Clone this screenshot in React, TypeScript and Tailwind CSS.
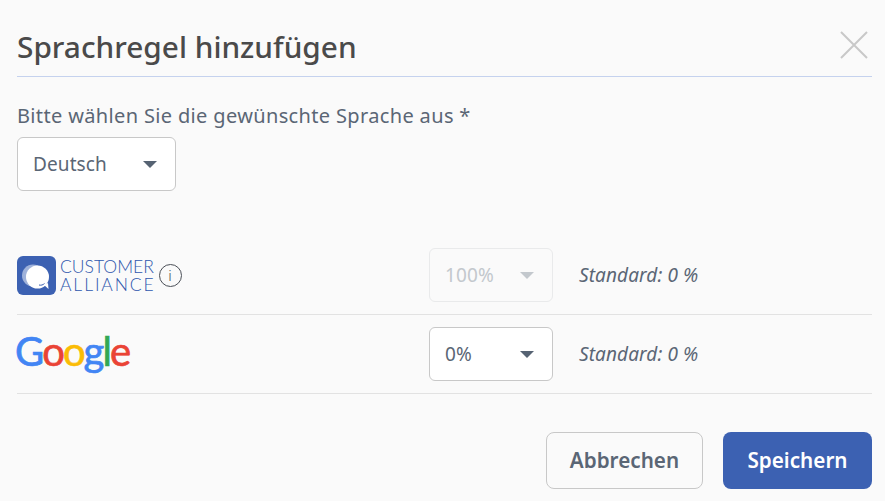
const font = "font-['Noto_Sans',sans-serif]"

function Select({ value, disabled, className }: { value: string; disabled?: boolean; className: string }) {
  return (
    <div
      className={`flex h-[54px] items-center justify-between rounded-md border pl-[15px] ${className} ${
        disabled ? "border-[#e9eaeb] text-[#c3c8cd]" : "border-[#c8c8c8] bg-white text-[#5a6675]"
      }`}
    >
      <span className="text-[19px] tracking-[0.100px]">{value}</span>
      <span
        className={`mr-[18px] h-0 w-0 border-x-[7px] border-t-[7px] border-x-transparent ${
          disabled ? "border-t-[#c3c8cd]" : "border-t-[#566373]"
        }`}
      />
    </div>
  )
}

function CaLogo() {
  return (
    <div className="flex items-center">
      <svg width="39" height="39" viewBox="0 0 39 39" className="shrink-0">
        <rect width="39" height="39" rx="6" fill="#3c61b2" />
        <circle cx="16" cy="19.500" r="11" fill="#9fb2da" />
        <circle cx="20.500" cy="21" r="11.500" fill="#fff" />
        <path d="M27 29l4.500 4-0.500-6z" fill="#fff" />
        <path d="M22 29c2 0.500 4 0 5.500-1.500" stroke="#3c61b2" strokeWidth="1" fill="none" />
      </svg>
      <div className="ml-[4px] flex flex-col font-['Lato',sans-serif] font-light text-[#2f57ad]">
        <span className="text-[17.500px] leading-[18px]">CUSTOMER</span>
        <span className="text-[17.500px] leading-[18px] tracking-[1.900px]">ALLIANCE</span>
      </div>
    </div>
  )
}

function GoogleLogo() {
  return (
    <div className="-ml-[2px] flex font-['Lato',sans-serif] text-[40px] leading-[40px] tracking-[-2px] [-webkit-text-stroke:0.700px]">
      <span className="text-[#4285f4]">G</span>
      <span className="text-[#ea4335]">o</span>
      <span className="text-[#fbbc05]">o</span>
      <span className="text-[#4285f4]">g</span>
      <span className="text-[#34a853]">l</span>
      <span className="text-[#ea4335]">e</span>
    </div>
  )
}

export default function App() {
  return (
    <div className={`flex h-[501px] w-[885px] flex-col overflow-hidden bg-[#fafafa] pr-[13px] pl-[17px] ${font}`}>
      {/* Header */}
      <div className="flex h-[77px] items-center justify-between border-b border-[#c5d2ee] pt-[17px]">
        <h1 className="text-[29.800px] leading-none font-medium text-[#4a4a4a]">Sprachregel hinzufügen</h1>
        <svg width="28" height="28" viewBox="0 0 28 28" className="mr-[4px] mb-[3px] text-[#c8c8c8]">
          <path d="M1 1l26 26M27 1L1 27" stroke="currentColor" strokeWidth="2" fill="none" />
        </svg>
      </div>

      {/* Language */}
      <p className="mt-[26px] text-[20px] leading-[26px] tracking-[0.350px] text-[#5a6675]">
        Bitte wählen Sie die gewünschte Sprache aus *
      </p>
      <Select value="Deutsch" className="mt-[8px] w-[159px]" />

      {/* Sources */}
      <div className="mt-[57px] flex h-[67px] items-start border-b border-[#e2e2e2]">
        <div className="flex w-[412px] items-center pt-[8px]">
          <CaLogo />
          <span className="ml-[3px] flex h-[23px] w-[23px] items-center justify-center rounded-full border border-[#4a4f57] text-[15px] leading-none font-light text-[#4a4f57]">
            i
          </span>
        </div>
        <Select value="100%" disabled className="w-[124px]" />
        <span className="ml-[26px] self-start pt-[14px] text-[19px] leading-[26px] tracking-[0.100px] text-[#5a6675] italic">
          Standard: 0 %
        </span>
      </div>
      <div className="flex h-[79px] items-start border-b border-[#e2e2e2] pt-[12px]">
        <div className="flex w-[412px] items-center pt-[4px]">
          <GoogleLogo />
        </div>
        <Select value="0%" className="w-[124px]" />
        <span className="ml-[26px] self-start pt-[14px] text-[19px] leading-[26px] tracking-[0.100px] text-[#5a6675] italic">
          Standard: 0 %
        </span>
      </div>

      {/* Footer */}
      <div className="mt-[38px] flex justify-end gap-5">
        <button className="h-[57px] w-[157px] rounded-lg border border-[#c8c8c8] text-[20.700px] font-semibold text-[#5a6675]">
          Abbrechen
        </button>
        <button className="h-[57px] w-[149px] rounded-lg bg-[#3c61b2] text-[20.700px] font-semibold text-white">Speichern</button>
      </div>
    </div>
  )
}
